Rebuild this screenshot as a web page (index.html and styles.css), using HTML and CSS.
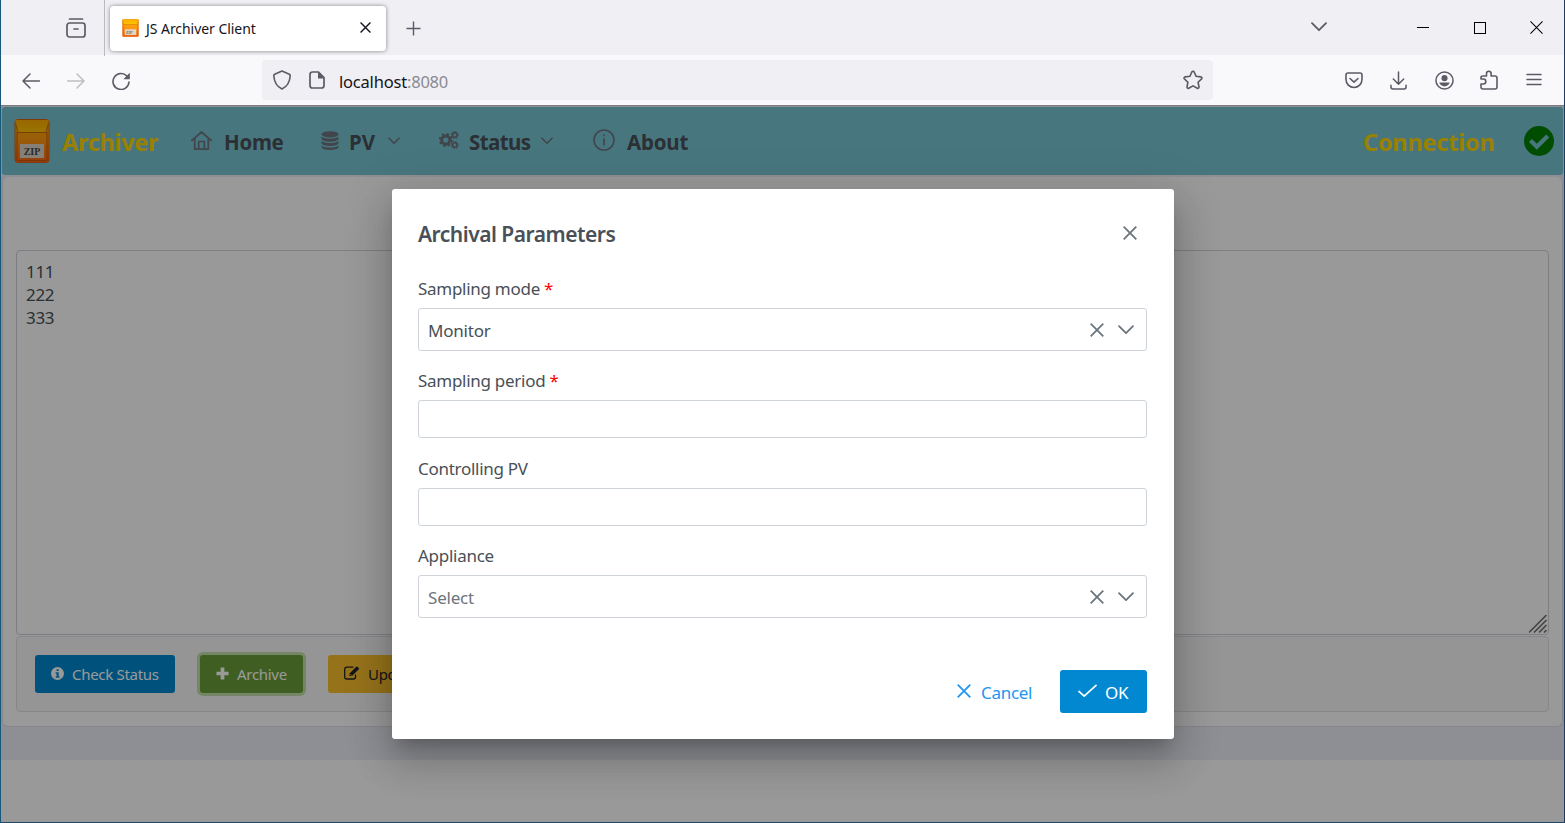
FILE: index.html
```html
<!DOCTYPE html>
<html lang="en">
<head>
<meta charset="utf-8">
<title>JS Archiver Client</title>
<link rel="stylesheet" href="styles.css">
</head>
<body>
<svg class="defs" width="0" height="0">
  <defs>
    <linearGradient id="zipBody" x1="0" y1="0" x2="0" y2="1"><stop offset="0" stop-color="#ffb400"/><stop offset=".45" stop-color="#ff9c10"/><stop offset="1" stop-color="#fb6514"/></linearGradient>
    <linearGradient id="zipFlap" x1="0" y1="0" x2="0" y2="1"><stop offset="0" stop-color="#ffad00"/><stop offset="1" stop-color="#ffc400"/></linearGradient>
    <symbol id="x" viewBox="0 0 14 14"><path d="M.7.7l12.6 12.6M13.3.7L.7 13.3" fill="none" stroke="currentColor" stroke-width="1.8"/></symbol>
    <symbol id="down" viewBox="0 0 16 10"><path d="M1 1.2l7 7 7-7" fill="none" stroke="currentColor" stroke-width="1.8" stroke-linecap="round" stroke-linejoin="round"/></symbol>
    <symbol id="caret" viewBox="0 0 12 8"><path d="M1 1.200l5 5 5-5" fill="none" stroke="currentColor" stroke-width="1.600" stroke-linecap="round" stroke-linejoin="round"/></symbol>
    <symbol id="zip" viewBox="0 0 36 44">
      <rect x="1" y=".5" width="34" height="43" rx="2.5" fill="url(#zipBody)" stroke="#d9600f"/>
      <path d="M3 13v27.500q0 1 1 1h28q1 0 1-1V13" fill="none" stroke="#cf560a"/>
      <path d="M1.500 1h33v3L32 13H4L1.500 4z" fill="url(#zipFlap)"/>
      <path d="M1.500 4L4 13.500h28L34.500 4" fill="none" stroke="#c76a0c"/>
      <rect x="6" y="25" width="24" height="14" fill="#ded6c6"/>
    </symbol>
  </defs>
</svg>
<div class="window">
  <header class="tabs">
    <svg class="view" viewBox="0 0 20 20"><path d="M3.500 1h13" fill="none" stroke="currentColor" stroke-width="1.700" stroke-linecap="round"/><rect x="1" y="5" width="18" height="14" rx="2.500" fill="none" stroke="currentColor" stroke-width="1.700"/><path d="M8 11h4" stroke="currentColor" stroke-width="1.700" stroke-linecap="round"/></svg>
    <div class="tab">
      <div class="favicon"><svg viewBox="0 0 36 44" preserveAspectRatio="none"><use href="#zip"/></svg><span>ZIP</span></div>
      <span class="tab-title">JS Archiver Client</span>
      <svg class="tab-close" viewBox="0 0 14 14"><use href="#x"/></svg>
    </div>
    <svg class="plus" viewBox="0 0 16 16"><path d="M8 .5v15M.5 8h15" stroke="currentColor" stroke-width="1.500"/></svg>
    <svg class="all-tabs" viewBox="0 0 16 10"><use href="#down"/></svg>
    <svg class="win-min" viewBox="0 0 12 12"><path d="M0 5.500h12" stroke="#000"/></svg>
    <svg class="win-max" viewBox="0 0 12 12"><rect x=".5" y=".5" width="11" height="11" fill="none" stroke="#000"/></svg>
    <svg class="win-close" viewBox="0 0 14 14"><path d="M.5.5l13 13M13.500.5l-13 13" stroke="#000" stroke-width="1.100"/></svg>
  </header>
  <div class="toolbar">
    <svg class="back" viewBox="0 0 18 16"><path d="M8 1L1 8l7 7M1 8h16.500" fill="none" stroke="currentColor" stroke-width="1.500" stroke-linecap="round" stroke-linejoin="round"/></svg>
    <svg class="forward" viewBox="0 0 18 16"><path d="M10 1l7 7-7 7M17 8H.5" fill="none" stroke="currentColor" stroke-width="1.500" stroke-linecap="round" stroke-linejoin="round"/></svg>
    <svg class="reload" viewBox="0 0 18 18"><path d="M15 4.200A8 8 0 1 0 17 10" fill="none" stroke="currentColor" stroke-width="1.600" stroke-linecap="round"/><path d="M17.800.8v6.400h-6.400z" fill="currentColor"/></svg>
    <div class="urlbar">
      <svg class="shield" viewBox="0 0 18 20"><path d="M9 1l7.300 3.200q1 .5.900 1.600C16.800 12.500 14.500 16.500 9 19 3.500 16.500 1.200 12.500.8 5.800q-.1-1.100.9-1.600z" fill="none" stroke="currentColor" stroke-width="1.600" stroke-linejoin="round"/></svg>
      <svg class="page" viewBox="0 0 16 18"><path d="M9.500 1H3.500Q1 1 1 3.500v11Q1 17 3.500 17h9q2.500 0 2.500-2.500V6.500z" fill="none" stroke="currentColor" stroke-width="1.700" stroke-linejoin="round"/><path d="M9 1v6.500h6.200z" fill="currentColor"/></svg>
      <span class="url">localhost<span class="port">:8080</span></span>
      <svg class="star" viewBox="0 0 20 20"><path d="M10 1.200c.5 0 .9.300 1.100.700l2 4.400 4.800.6c1 .1 1.400 1.300.7 2l-3.500 3.300.9 4.800c.2 1-.9 1.700-1.700 1.200L10 15.900l-4.300 2.300c-.8.500-1.900-.2-1.700-1.200l.9-4.800-3.500-3.300c-.7-.7-.3-1.900.7-2l4.800-.6 2-4.400c.2-.4.600-.7 1.100-.7z" fill="none" stroke="currentColor" stroke-width="1.600"/></svg>
    </div>
    <svg class="pocket" viewBox="0 0 18 17"><path d="M3 1h12q2 0 2 2v4.500a8 8 0 0 1-16 0V3q0-2 2-2z" fill="none" stroke="currentColor" stroke-width="1.600"/><path d="M5 6.500l4 3.700 4-3.700" fill="none" stroke="currentColor" stroke-width="1.600" stroke-linecap="round" stroke-linejoin="round"/></svg>
    <svg class="download" viewBox="0 0 18 20"><path d="M9 1v13M3.500 8.500L9 14l5.500-5.500M1 15v2q0 2 2 2h12q2 0 2-2v-2" fill="none" stroke="currentColor" stroke-width="1.600" stroke-linecap="round" stroke-linejoin="round"/></svg>
    <svg class="account" viewBox="0 0 20 20"><circle cx="10" cy="10" r="9" fill="none" stroke="currentColor" stroke-width="1.600"/><circle cx="10" cy="7.500" r="3.200" fill="currentColor"/><path d="M4.500 12.200h11c-.8 2.600-3 4-5.500 4s-4.700-1.400-5.500-4z" fill="currentColor"/></svg>
    <svg class="extension" viewBox="0 0 18 20"><path d="M3 19q-2 0-2-2v-3h2.300a2 2 0 0 0 0-5H1V7.500Q1 6 3 6h3.500V3.500a2.300 2.300 0 0 1 4.600 0V6H15q2 0 2 2v9q0 2-2 2z" fill="none" stroke="currentColor" stroke-width="1.600" stroke-linejoin="round"/></svg>
    <svg class="menu" viewBox="0 0 16 14"><path d="M1 1.500h14M1 6.500h14M1 11.500h14" stroke="currentColor" stroke-width="1.500" stroke-linecap="round"/></svg>
  </div>
  <main class="content">
    <div class="app">
      <nav class="navbar">
        <div class="logo"><svg viewBox="0 0 36 44"><use href="#zip"/></svg><span>ZIP</span></div>
        <span class="brand">Archiver</span>
        <svg class="i-home" viewBox="0 0 21 19"><path d="M.8 9.500L10.500 1l9.700 8.500M3.700 7.500v10.700h13.600V7.500M7.700 18v-7.500h5.600V18" fill="none" stroke="currentColor" stroke-width="1.700" stroke-linecap="round" stroke-linejoin="round"/></svg>
        <span class="item home">Home</span>
        <svg class="i-db" viewBox="0 0 18 19"><g fill="currentColor"><ellipse cx="9" cy="3.300" rx="8.500" ry="3.100"/><path d="M.5 5.600c3 2.700 14 2.700 17 0v2.100c0 4-17 4-17 0zM.5 10c3 2.700 14 2.700 17 0v2.100c0 4-17 4-17 0zM.5 14.400c3 2.700 14 2.700 17 0v1.500c0 4-17 4-17 0z"/></g></svg>
        <span class="item pv">PV</span>
        <svg class="caret" viewBox="0 0 12 8"><use href="#caret"/></svg>
        <svg class="i-gears" viewBox="0 0 20 18"><g fill="none" stroke="currentColor"><circle cx="6.800" cy="9" r="4.100" stroke-width="3"/><circle cx="6.800" cy="9" r="6" stroke-width="2" stroke-dasharray="2.400 2.312"/><circle cx="15.800" cy="4" r="2.200" stroke-width="1.500"/><circle cx="15.800" cy="4" r="3.400" stroke-width="1.200" stroke-dasharray="1.500 1.170"/><circle cx="15.800" cy="14" r="2.200" stroke-width="1.500"/><circle cx="15.800" cy="14" r="3.400" stroke-width="1.200" stroke-dasharray="1.500 1.170"/></g></svg>
        <span class="item status">Status</span>
        <svg class="caret" viewBox="0 0 12 8"><use href="#caret"/></svg>
        <svg class="i-info" viewBox="0 0 22 22"><circle cx="11" cy="11" r="10" fill="none" stroke="currentColor" stroke-width="1.600"/><path d="M11 9.500v7M11 5.500v1.700" stroke="currentColor" stroke-width="1.700"/></svg>
        <span class="item about">About</span>
        <span class="connection">Connection</span>
        <svg class="ok-badge" viewBox="0 0 30 30"><circle cx="15" cy="15" r="15" fill="#008000"/><path d="M6.500 14.500l6.300 6.300L23.700 10" fill="none" stroke="#78c5d4" stroke-width="4.200"/></svg>
      </nav>
      <section class="card">
        <div class="pv-list">
          <span>111</span><span>222</span><span>333</span>
          <svg class="grip" viewBox="0 0 18 18"><path d="M0 17.500L17.500 0M5 17.500L17.500 5M10 17.500l7.500-7.500M15 17.500l2.500-2.500" stroke="#6b6b6b" stroke-width="1.500"/></svg>
        </div>
        <div class="actions">
          <button class="btn check"><svg viewBox="0 0 14 14"><circle cx="7" cy="7" r="7" fill="currentColor"/><path d="M6 2.300h2.300v2H6zM5 5.700h3.300v4.500h1v1.500H5v-1.500h1V7.200H5z" fill="#0288d1"/></svg><span>Check Status</span></button>
          <button class="btn archive"><svg viewBox="0 0 14 14"><path d="M7 .5v13M.5 7h13" stroke="currentColor" stroke-width="4"/></svg><span>Archive</span></button>
          <button class="btn update"><svg viewBox="0 0 16 14"><path d="M11.500 8.500V11q0 2-2 2H3q-2.300 0-2.300-2V3.500q0-2.300 2.300-2.300h6.500" fill="none" stroke="currentColor" stroke-width="1.300"/><path d="M5.500 10V7.500L12.800.3l2.500 2.500L8 10z" fill="currentColor"/><path d="M6 8l1.700 1.700" stroke="#fbc02d" stroke-width=".7"/></svg><span>Update</span></button>
        </div>
      </section>
    </div>
    <div class="mask">
      <div class="dialog">
        <div class="dialog-head"><h2>Archival Parameters</h2><svg class="icon-x" viewBox="0 0 14 14"><use href="#x"/></svg></div>
        <div class="field"><label>Sampling mode <b>*</b></label><div class="select"><span>Monitor</span><svg class="icon-x" viewBox="0 0 14 14"><use href="#x"/></svg><svg class="icon-down" viewBox="0 0 16 10"><use href="#down"/></svg></div></div>
        <div class="field"><label>Sampling period <b>*</b></label><div class="input"></div></div>
        <div class="field"><label>Controlling PV</label><div class="input"></div></div>
        <div class="field"><label>Appliance</label><div class="select"><span class="placeholder">Select</span><svg class="icon-x" viewBox="0 0 14 14"><use href="#x"/></svg><svg class="icon-down" viewBox="0 0 16 10"><use href="#down"/></svg></div></div>
        <div class="dialog-foot">
          <button class="cancel"><svg class="icon-x" viewBox="0 0 14 14"><use href="#x"/></svg><span>Cancel</span></button>
          <button class="ok"><svg viewBox="0 0 20 14"><path d="M1 7.500l5.500 5L19 1" fill="none" stroke="currentColor" stroke-width="1.800" stroke-linecap="round" stroke-linejoin="round"/></svg><span>OK</span></button>
        </div>
      </div>
    </div>
  </main>
</div>
</body>
</html>
```
FILE: styles.css
```css
* { box-sizing: border-box; }
body { margin: 0; font-family: "Noto Sans", "Open Sans", sans-serif; color: #495057; overflow: hidden; }
svg { display: block; flex: none; }
span { white-space: nowrap; }
button { border: 0; font-family: inherit; }
.defs { position: absolute; }
.window { width: 1565px; height: 823px; border: solid #1d3c63; border-width: 0 1px 1px 0; border-left: 1px solid #17587a; border-bottom-color: #1c4a6c; display: flex; flex-direction: column; background: #f9f9fb; }

/* Browser chrome */
.tabs { height: 55px; padding-top: 1px; background: #f0eff4; display: flex; align-items: center; color: #5b5b66; }
.view { width: 20px; height: 20px; margin: -1px 0 0 65px; }
.tab { width: 276px; height: 45px; margin-left: 24px; padding-left: 12px; position: relative; background: #fff; border-radius: 4px; box-shadow: 0 0 4px rgba(0,0,0,.45); display: flex; align-items: center; }
.tab::before { content: ""; position: absolute; left: -6px; top: -6px; width: 1px; height: 56px; background: #b9b9c0; }
.favicon { width: 17px; height: 18px; position: relative; }
.favicon svg { width: 17px; height: 18px; }
.favicon span { position: absolute; left: 4px; top: 11px; font: bold italic 4px/5px "Liberation Serif", serif; color: #665; }
.tab-title { width: 214px; margin-left: 7px; font-size: 14.500px; letter-spacing: -.1px; color: #15141a; }
.tab-title { letter-spacing: -.05px; font-size: 14px; padding-top: 1px; }
.tab-close { width: 11px; height: 11px; margin-top: -1px; color: #15141a; }
.plus { width: 15px; height: 15px; margin-left: 20px; }
.all-tabs { width: 16px; height: 10px; margin: -2px 0 0 890px; }
.win-min, .win-max, .win-close { margin-top: -1px; }
.win-min { width: 12px; height: 12px; margin-left: 90px; }
.win-max { width: 12px; height: 12px; margin-left: 45px; }
.win-close { width: 13px; height: 13px; margin-left: 44px; }

.toolbar { height: 50px; display: flex; align-items: center; color: #5b5b66; }
.back, .forward { width: 18px; height: 16px; margin: 1px 0 0 21px; }
.forward { margin-left: 27px; color: #bdbdc3; }
.reload { width: 18px; height: 18px; margin: 1px 0 0 27px; }
.urlbar { width: 951px; height: 40px; margin-left: 132px; border-radius: 4px; background: #f0eff4; display: flex; align-items: center; }
.shield { width: 18px; height: 20px; margin-left: 11px; }
.page { width: 16px; height: 18px; margin-left: 18px; }
.url { width: 829px; margin-left: 14px; padding-top: 2px; font-size: 16.500px; letter-spacing: -.2px; color: #15141a; }
.port { color: #8a8a92; }
.star { width: 20px; height: 20px; margin-left: 15px; }
.pocket { width: 18px; height: 17px; margin-left: 132px; }
.download { width: 17px; height: 19px; margin-left: 27px; }
.account { width: 19px; height: 19px; margin: 1px 0 0 28px; }
.extension { width: 18px; height: 20px; margin-left: 26px; }
.menu { width: 16px; height: 14px; margin-left: 28px; }

/* Application page */
.content { flex: 1; position: relative; background: #fff; }
.content::before { content: ""; display: block; height: 1px; background: #d0d0d4; }
.app { height: 654px; background: #edeff7; padding: 1px 1px 0; }
.navbar { height: 68px; border-radius: 3px; background: #78c5d4; display: flex; align-items: center; }
.logo { width: 36px; height: 44px; margin-left: 12px; position: relative; }
.logo svg { width: 36px; height: 44px; }
.logo span { position: absolute; left: 8px; top: 27px; width: 20px; text-align: center; font: bold 10px/11px "Liberation Serif", serif; color: #464646; }
.brand, .connection { padding-top: 2px; font-size: 23.500px; font-weight: 700; color: gold; }
.brand { width: 97px; margin-left: 12px; letter-spacing: -.3px; }
.connection { width: 132px; margin-left: 675px; letter-spacing: -.2px; }
.item { padding-top: 2px; font-size: 20.500px; font-weight: 700; letter-spacing: -.3px; margin-left: 12px; color: #495057; }
.i-home, .i-db, .i-gears, .i-info, .caret { color: #6c757d; margin-top: -2px; }
.i-home { width: 21px; height: 19px; margin-left: 32px; }
.home { width: 60px; }
.i-db { width: 18px; height: 19px; margin-left: 37px; }
.pv { width: 28px; margin-left: 10px; letter-spacing: 0; }
.caret { width: 12px; height: 8px; margin: -1px 0 0 11px; }
.i-gears { width: 20px; height: 18px; margin-left: 39px; }
.status { width: 62px; margin-left: 10px; letter-spacing: -.6px; }
.caret + .i-info { width: 22px; height: 22px; margin-left: 40px; }
.status + .caret { margin-left: 10px; }
.about { width: 61px; margin-left: 12px; letter-spacing: -.2px; }
.ok-badge { width: 30px; height: 30px; margin-left: 29px; margin-top: -1px; }

.card { height: 550px; margin-top: 2px; background: #fff; border: 1px solid #dee2e6; border-top: 0; border-radius: 6px; padding: 73px 13px 0; }
.pv-list { height: 385px; border: 1px solid #ced4da; border-radius: 4px; padding: 9px; display: flex; flex-direction: column; position: relative; font-size: 17px; line-height: 23px; letter-spacing: -.3px; }
.grip { position: absolute; right: 1px; bottom: 1px; width: 18px; height: 18px; }
.actions { height: 76px; margin-top: 1px; border: 1px solid #dee2e6; border-radius: 4px; background: #f8f9fa; display: flex; align-items: center; padding-left: 18px; }
.btn { height: 38px; border-radius: 3px; color: #fff; display: flex; align-items: center; font-size: 15px; letter-spacing: -.3px; padding: 0 0 0 16px; }
.btn svg { width: 13px; height: 13px; margin: -2px 8px 0 0; }
.check { width: 140px; background: #0288d1; }
.archive { width: 103px; margin-left: 25px; background: #689f38; box-shadow: 0 0 0 3px #c2e0a8; }
.update { width: 110px; margin-left: 25px; background: #fbc02d; color: #212529; }
.update svg { width: 16px; height: 14px; }

/* Modal */
.mask { position: absolute; inset: 0; background: rgba(0,0,0,.4); }
.dialog { position: absolute; left: 391px; top: 84px; width: 782px; height: 550px; padding: 0 27px 0 26px; background: #fff; border-radius: 3px; box-shadow: 0 11px 15px -7px rgba(0,0,0,.2), 0 24px 38px 3px rgba(0,0,0,.14), 0 9px 46px 8px rgba(0,0,0,.12); display: flex; flex-direction: column; }
.dialog-head { height: 85px; display: flex; justify-content: space-between; align-items: center; padding: 4px 10px 0 0; }
h2 { margin: 0; font-size: 21px; line-height: 28px; font-weight: 600; letter-spacing: -.5px; }
.icon-x { width: 14px; height: 14px; color: #6c757d; }
.dialog-head .icon-x { margin-top: -2px; }
.field { margin-bottom: 15px; }
.field:has(.input) { margin-bottom: 16px; }
.field:nth-child(4) { margin-bottom: 15px; }
label { display: block; height: 34px; font-size: 17px; line-height: 30px; letter-spacing: -.28px; }
label b { color: red; font-weight: 400; }
.select, .input { border: 1px solid #ced4da; border-radius: 3px; }
.input { height: 38px; }
.select { height: 43px; display: flex; align-items: center; padding: 0 12px 0 9px; font-size: 17px; letter-spacing: -.2px; }
.select span { flex: 1; padding-top: 1px; }
.placeholder { color: #6c757d; }
.icon-down { width: 16px; height: 10px; margin-left: 14px; color: #6c757d; }
.dialog-foot { margin-top: 37px; display: flex; justify-content: flex-end; }
.dialog-foot button { height: 43px; border-radius: 3px; display: flex; align-items: center; font-size: 17px; letter-spacing: -.3px; padding: 2px 0 0; }
.cancel { width: 103px; background: transparent; color: #2196f3; }
.cancel .icon-x { color: #2196f3; margin: -4px 10px 0 0; }
.ok { width: 87px; background: #0288d1; color: #fff; }
.dialog-foot .ok { padding-left: 18px; }
.ok svg { width: 19px; height: 14px; margin: -4px 8px 0 0; }
```
